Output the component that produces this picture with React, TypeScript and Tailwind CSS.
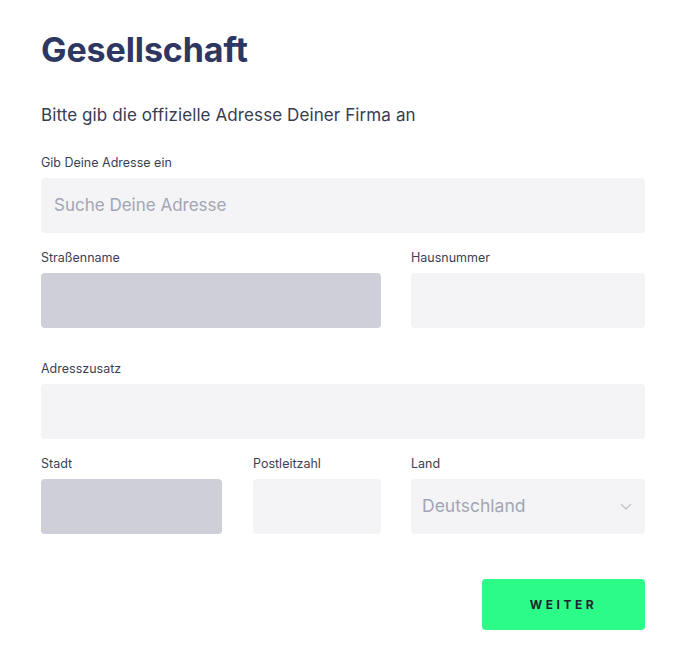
import React from "react";

const Label = ({ children }: { children: React.ReactNode }) => (
  <div className="text-[12.5px] text-[#3b3f55] leading-[16px] mb-[7px]">{children}</div>
);

export default function App() {
  return (
    <div className="min-h-screen bg-white font-['Inter',sans-serif]">
      <div className="w-[604px] ml-[41px] pt-[28px]">
        <h1 className="text-[34px] font-bold text-[#2e3762] leading-[44px] tracking-[-0.1px]">Gesellschaft</h1>
        <p className="mt-[32px] text-[17px] text-[#383c52] leading-[22px] tracking-[0.1px]">Bitte gib die offizielle Adresse Deiner Firma an</p>

        <div className="mt-[29px]">
          <Label>Gib Deine Adresse ein</Label>
          <div className="h-[55px] rounded-[4px] bg-[#f4f4f6] flex items-center px-[13px] text-[17px] text-[#a3a5b4]">Suche Deine Adresse</div>
        </div>

        <div className="mt-[17px] flex">
          <div className="w-[340px]">
            <Label>Straßenname</Label>
            <div className="h-[55px] rounded-[4px] bg-[#cfcfda]" />
          </div>
          <div className="w-[234px] ml-[30px]">
            <Label>Hausnummer</Label>
            <div className="h-[55px] rounded-[4px] bg-[#f4f4f6]" />
          </div>
        </div>

        <div className="mt-[33px]">
          <Label>Adresszusatz</Label>
          <div className="h-[55px] rounded-[4px] bg-[#f4f4f6]" />
        </div>

        <div className="mt-[17px] flex">
          <div className="w-[181px]">
            <Label>Stadt</Label>
            <div className="h-[55px] rounded-[4px] bg-[#cfcfda]" />
          </div>
          <div className="w-[128px] ml-[31px]">
            <Label>Postleitzahl</Label>
            <div className="h-[55px] rounded-[4px] bg-[#f4f4f6]" />
          </div>
          <div className="w-[234px] ml-[30px]">
            <Label>Land</Label>
            <div className="h-[55px] rounded-[4px] bg-[#f4f4f6] flex items-center justify-between pl-[11px] pr-[12px]">
              <span className="text-[17.5px] text-[#a3a5b4]">Deutschland</span>
              <svg width="14" height="9" viewBox="0 0 14 9" fill="none">
                <path d="M2 2l5 5 5-5" stroke="#c4c6cf" strokeWidth="1.5" />
              </svg>
            </div>
          </div>
        </div>

        <div className="mt-[45px] flex justify-end">
          <button className="w-[163px] h-[51px] rounded-[4px] bg-[#2dfb88] text-[12px] font-bold tracking-[3.5px] text-[#1d2430]">WEITER</button>
        </div>
      </div>
    </div>
  );
}
